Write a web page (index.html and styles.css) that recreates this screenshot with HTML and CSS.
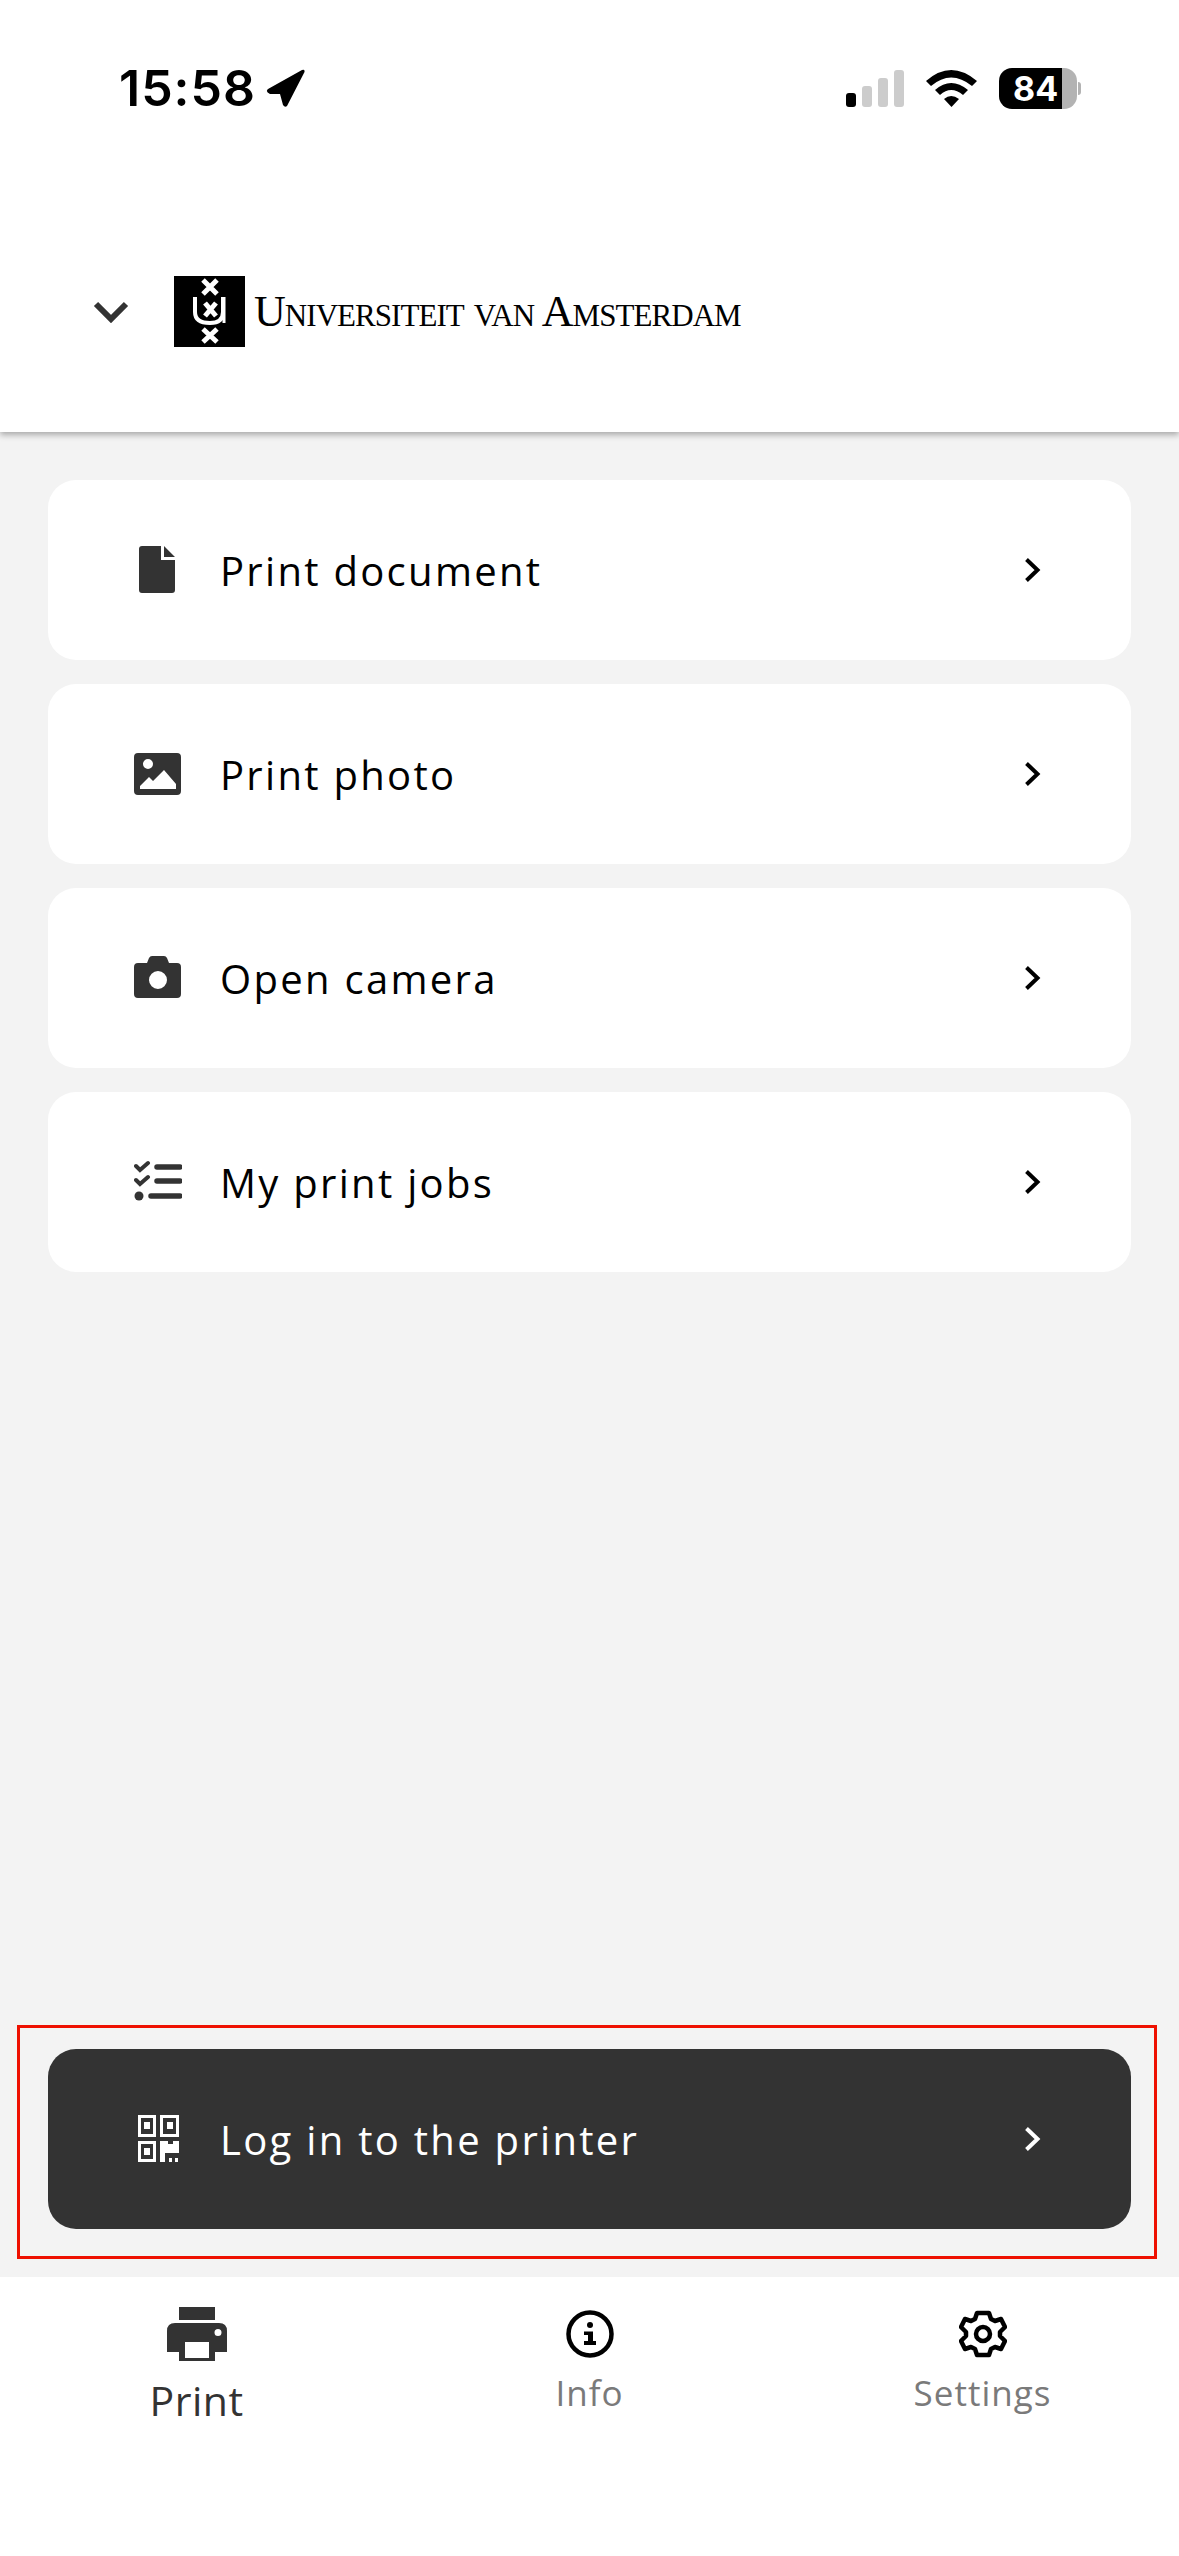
FILE: index.html
```html
<!DOCTYPE html>
<html>

<head>
    <title>Print</title>
    <link rel="stylesheet" href="styles.css">
</head>

<body>
    <div class="app">
        <div class="top">
            <div class="status">
                <div class="clock">
                    <span>15:58</span>
                    <svg class="arrow" viewBox="0 0 40 40"><path d="M2 21 L36 2 Q39 1 38.500 4 L21 38 Q19 40 17 37 L14 26 L4 26 Q-1 24 2 21 Z" /></svg>
                </div>
                <div class="status-right">
                    <svg class="signal" viewBox="0 0 58 37">
                        <rect x="0" y="23" width="10" height="14" rx="3" fill="#000" />
                        <rect x="16" y="16" width="10" height="21" rx="3" fill="#ccc" />
                        <rect x="32" y="8" width="10" height="29" rx="3" fill="#ccc" />
                        <rect x="48" y="0" width="10" height="37" rx="3" fill="#ccc" />
                    </svg>
                    <svg class="wifi" viewBox="0 0 51 37">
                        <path d="M0 11 Q25 -11 51 11 L46 16 Q25 -1 5 16 Z" />
                        <path d="M9 20 Q25 6 42 20 L37 25 Q25 15 14 25 Z" />
                        <path d="M18 29 Q25 23 33 29 L25.500 37 Z" />
                    </svg>
                    <div class="battery">
                        <div class="battery-body">
                            <span class="battery-level">84</span>
                        </div>
                        <div class="battery-nub"></div>
                    </div>
                </div>
            </div>
            <div class="brand">
                <svg class="brand-chevron" viewBox="0 0 36 22"><path d="M3 3 L18 18 L33 3" /></svg>
                <svg class="crest" viewBox="0 0 71 71">
                    <rect width="71" height="71" fill="#000" />
                    <g stroke="#fff" stroke-width="5" fill="none">
                        <path d="M29 4 L43 18 M43 4 L29 18" />
                        <path d="M31 27 L42 40 M42 27 L31 40" />
                        <path d="M29 53 L43 66 M43 53 L29 66" />
                        <path d="M21 21 L21 36 Q21 47 36 47 Q49 47 49 36 L49 21" stroke-width="4" />
                        <path d="M50 21 L50 47" stroke-width="3" />
                    </g>
                </svg>
                <span class="brand-name">Universiteit van Amsterdam</span>
            </div>
        </div>

        <div class="content">
            <div class="menu">
                <a class="row">
                    <svg class="row-icon" viewBox="0 0 48 48"><path d="M5 3 Q5 0 8 0 L27 0 L27 14 L41 14 L41 44 Q41 47 38 47 L8 47 Q5 47 5 44 Z M30 0 L41 11 L30 11 Z" fill="#333" /></svg>
                    <span class="row-label">Print document</span>
                    <svg class="row-chevron" viewBox="0 0 17 26"><path d="M2.500 2.500 L13.500 13 L2.500 23.500" /></svg>
                </a>
                <a class="row">
                    <svg class="row-icon" viewBox="0 0 48 48"><path fill-rule="evenodd" d="M4 3 L43 3 Q47 3 47 7 L47 41 Q47 45 43 45 L4 45 Q0 45 0 41 L0 7 Q0 3 4 3 Z M14 9 A5 5 0 1 0 14 19 A5 5 0 1 0 14 9 Z M6 39 L42 39 L42 34 L30 20 L19 31 L15 27 L6 36 Z" fill="#333" /></svg>
                    <span class="row-label">Print photo</span>
                    <svg class="row-chevron" viewBox="0 0 17 26"><path d="M2.500 2.500 L13.500 13 L2.500 23.500" /></svg>
                </a>
                <a class="row">
                    <svg class="row-icon" viewBox="0 0 48 48"><path fill-rule="evenodd" d="M4 9 L13 9 L15 4 Q16 2 18 2 L30 2 Q32 2 33 4 L35 9 L43 9 Q47 9 47 13 L47 40 Q47 44 43 44 L4 44 Q0 44 0 40 L0 13 Q0 9 4 9 Z M24 17 A9 9 0 1 0 24 35 A9 9 0 1 0 24 17 Z" fill="#333" /></svg>
                    <span class="row-label">Open camera</span>
                    <svg class="row-chevron" viewBox="0 0 17 26"><path d="M2.500 2.500 L13.500 13 L2.500 23.500" /></svg>
                </a>
                <a class="row">
                    <svg class="row-icon" viewBox="0 0 48 48">
                        <g fill="none" stroke="#333" stroke-linecap="round">
                            <path d="M2 8 L6 12 L14 5 M2 22 L6 26 L14 19" stroke-width="4" />
                            <path d="M23 9 L46 9 M23 23 L46 23 M17 38 L46 38" stroke-width="5.500" />
                        </g>
                        <circle cx="5" cy="38" r="4.500" fill="#333" />
                    </svg>
                    <span class="row-label">My print jobs</span>
                    <svg class="row-chevron" viewBox="0 0 17 26"><path d="M2.500 2.500 L13.500 13 L2.500 23.500" /></svg>
                </a>
            </div>

            <div class="login-frame">
                <a class="row row-dark">
                    <svg class="row-icon" viewBox="0 0 48 48">
                        <g fill="none" stroke="#fff" stroke-width="3">
                            <rect x="5.500" y="1.500" width="15" height="19" />
                            <rect x="27.500" y="1.500" width="16" height="19" />
                            <rect x="5.500" y="27.500" width="15" height="18" />
                        </g>
                        <g fill="#fff">
                            <rect x="10" y="7" width="6" height="7" />
                            <rect x="33" y="7" width="6" height="7" />
                            <rect x="10" y="33" width="6" height="7" />
                            <path d="M26 26 L34 26 L34 29 L39 29 L39 26 L45 26 L45 38 L31 38 L31 47 L26 47 Z" />
                            <rect x="35" y="43" width="3" height="4" />
                            <rect x="41" y="43" width="3" height="4" />
                        </g>
                    </svg>
                    <span class="row-label">Log in to the printer</span>
                    <svg class="row-chevron" viewBox="0 0 17 26"><path d="M2.500 2.500 L13.500 13 L2.500 23.500" /></svg>
                </a>
            </div>
        </div>

        <div class="tabs">
            <div class="tab tab-active">
                <svg class="tab-icon-print" viewBox="0 0 60 54">
                    <path fill-rule="evenodd" d="M12 0 L48 0 L48 13 L12 13 Z M8 16 L52 16 Q60 16 60 24 L60 45 L48 45 L48 54 L12 54 L12 45 L0 45 L0 24 Q0 16 8 16 Z M18 35 L18 51 L42 51 L42 35 Z M51 22 A3.500 3.500 0 1 0 51 29 A3.500 3.500 0 1 0 51 22 Z" fill="#333" />
                </svg>
                <span>Print</span>
            </div>
            <div class="tab">
                <svg class="tab-icon" viewBox="0 0 48 48">
                    <circle cx="24" cy="24" r="21.500" fill="none" stroke="#000" stroke-width="4.500" />
                    <circle cx="24" cy="15" r="3" fill="#000" />
                    <path d="M18 21.500 L27 21.500 L27 31 L30 31 L30 35 L18 35 L18 31 L22 31 L22 25 L18 25 Z" fill="#000" />
                </svg>
                <span>Info</span>
            </div>
            <div class="tab">
                <svg class="tab-icon" viewBox="0 0 48 48">
                    <path d="M18 3 L30 3 L32 9 L36 11 L42 9 L46 17 L41 22 L41 26 L46 31 L42 39 L36 37 L32 39 L30 45 L18 45 L16 39 L12 37 L6 39 L2 31 L7 26 L7 22 L2 17 L6 9 L12 11 L16 9 Z" fill="none" stroke="#000" stroke-width="4.500" stroke-linejoin="round" />
                    <circle cx="24" cy="24" r="7" fill="none" stroke="#000" stroke-width="4.500" />
                </svg>
                <span>Settings</span>
            </div>
        </div>
    </div>
</body>

</html>
```

FILE: styles.css
```css
* {
    box-sizing: border-box;
}

body {
    margin: 0;
    font-family: "Open Sans", sans-serif;
    background-color: #fff;
}

.app {
    display: flex;
    flex-direction: column;
    height: 2556px;
}

.top {
    height: 432px;
    padding-top: 54px;
    background-color: #fff;
    box-shadow: 0 3px 6px rgba(0, 0, 0, 0.3);
    position: relative;
}

.status {
    display: flex;
    justify-content: space-between;
    align-items: center;
    height: 68px;
    padding: 0 98px 0 119px;
}

.clock {
    display: flex;
    align-items: center;
    gap: 10px;
    font-family: Inter, sans-serif;
    font-weight: 600;
    font-size: 50px;
    letter-spacing: 1px;
    color: #000;
}

.arrow {
    width: 40px;
    height: 40px;
}

.status-right {
    display: flex;
    align-items: center;
    gap: 22px;
}

.signal {
    width: 58px;
    height: 37px;
}

.wifi {
    width: 51px;
    height: 37px;
}

.battery {
    display: flex;
    align-items: center;
    gap: 1px;
}

.battery-body {
    width: 78px;
    height: 41px;
    border-radius: 13px;
    background: linear-gradient(to right, #000 63px, #b3b3b3 63px);
    padding-left: 14px;
}

.battery-level {
    font-family: Inter, sans-serif;
    font-weight: 700;
    font-size: 34px;
    line-height: 41px;
    color: #fff;
    display: block;
}

.battery-nub {
    width: 3px;
    height: 13px;
    background-color: #b3b3b3;
    border-radius: 0 4px 4px 0;
}

.brand {
    display: flex;
    align-items: center;
    padding-left: 93px;
    margin-top: 154px;
}

.brand-chevron {
    width: 36px;
    height: 22px;
    fill: none;
    stroke: #333;
    stroke-width: 6;
}

.crest {
    width: 71px;
    height: 71px;
    margin-left: 45px;
}

.brand-name {
    margin-left: 9px;
    font-family: "Liberation Serif", serif;
    font-variant: small-caps;
    font-size: 44px;
    letter-spacing: -0.950px;
    color: #000;
    white-space: nowrap;
}

.content {
    flex: 1;
    display: flex;
    flex-direction: column;
    justify-content: space-between;
    background-color: #f3f3f3;
    padding: 48px 22px 18px 17px;
}

.menu {
    display: flex;
    flex-direction: column;
    gap: 24px;
    margin: 0 26px 0 31px;
}

.row {
    display: flex;
    align-items: center;
    height: 180px;
    padding: 0 90px 0 86px;
    background-color: #fff;
    border-radius: 28px;
    color: #000;
}

.row-icon {
    width: 48px;
    height: 48px;
    flex-shrink: 0;
}

.row-label {
    flex: 1;
    margin-left: 38px;
    font-size: 40px;
    letter-spacing: 2.300px;
}

.row-chevron {
    width: 17px;
    height: 26px;
    fill: none;
    stroke: #000;
    stroke-width: 4;
}

.row-dark {
    background-color: #333;
    color: #fff;
}

.row-dark .row-chevron {
    stroke: #fff;
}

.login-frame {
    border: 3px solid #ee1000;
    padding: 21px 23px 27px 28px;
}

.tabs {
    display: grid;
    grid-template-columns: repeat(3, 1fr);
    height: 279px;
    background-color: #fff;
}

.tab {
    display: flex;
    flex-direction: column;
    align-items: center;
    gap: 11px;
    padding-top: 33px;
    font-size: 35px;
    letter-spacing: 1px;
    color: #7a7a7a;
}

.tab-icon {
    width: 48px;
    height: 48px;
}

.tab-active {
    padding-top: 30px;
    font-size: 41px;
    letter-spacing: 0.500px;
    color: #333;
}

.tab-icon-print {
    width: 60px;
    height: 54px;
}
```
